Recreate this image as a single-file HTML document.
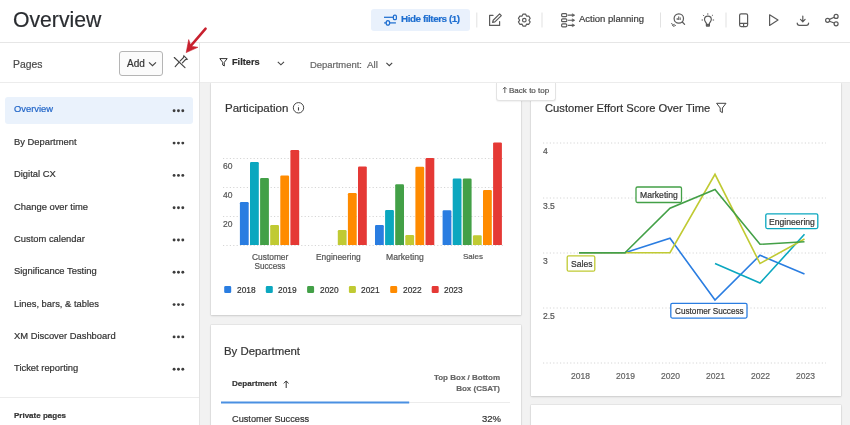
<!DOCTYPE html>
<html><head><meta charset="utf-8">
<style>
html,body{margin:0;padding:0;}
body{width:850px;height:425px;overflow:hidden;position:relative;background:#fff;font-family:"Liberation Sans",sans-serif;color:#333;}
.a{position:absolute;}
.t{position:absolute;white-space:nowrap;line-height:1;will-change:transform;-webkit-text-stroke:0.2px currentColor;}
.hl{position:absolute;background:#e4e4e4;}
.card{position:absolute;background:#fff;box-shadow:0 0 0 0.5px rgba(0,0,0,0.09),0 1px 2px rgba(0,0,0,0.12);}
svg{position:absolute;overflow:visible;}
</style></head><body>

<!-- top header -->
<div class="t" id="title" style="left:12.9px;top:9.2px;font-size:21.2px;color:#2a2d31;">Overview</div>
<div class="hl" style="left:0;top:42px;width:850px;height:1px;background:#e6e6e6;"></div>

<div class="a" style="left:371px;top:8.5px;width:99px;height:22.5px;background:#e9f1fc;border-radius:3px;"></div>
<svg style="left:0;top:0" width="850" height="42">
  <!-- sliders icon -->
  <g stroke="#1f6fd0" stroke-width="1.25" fill="none">
    <line x1="384" y1="17.3" x2="393" y2="17.3"/>
    <rect x="393.4" y="15.1" width="3" height="4.6" rx="1.3" fill="#e9f1fc"/>
    <line x1="384.1" y1="22.9" x2="395.9" y2="22.9"/>
    <ellipse cx="387.9" cy="22.9" rx="1.75" ry="2.2" fill="#e9f1fc"/>
  </g>
  <!-- separators -->
  <g fill="#e2e2e2">
    <rect x="476.3" y="12.5" width="1" height="15"/>
    <rect x="541.5" y="12.5" width="1" height="15"/>
    <rect x="660" y="12.5" width="1" height="15"/>
    <rect x="725.5" y="12.5" width="1" height="15"/>
  </g>
  <g stroke="#5a5a5a" stroke-width="1.2" fill="none" stroke-linecap="round" stroke-linejoin="round">
    <!-- edit -->
    <path d="M493 15.4 H489.6 V25.4 H499.6 V21.5"/>
    <path d="M492.6 22.4 L493.2 20.2 L499.6 13.9 L501.3 15.6 L494.9 21.9 Z"/>
    <!-- gear -->
    <path d="M522.09 16.00 L522.93 14.21 L525.67 14.21 L526.51 16.00 L526.79 16.16 L528.76 15.99 L530.13 18.37 L529.00 19.99 L529.00 20.31 L530.13 21.93 L528.76 24.31 L526.79 24.14 L526.51 24.30 L525.67 26.09 L522.93 26.09 L522.09 24.30 L521.81 24.14 L519.84 24.31 L518.47 21.93 L519.60 20.31 L519.60 19.99 L518.47 18.37 L519.84 15.99 L521.81 16.16 Z"/>
    <circle cx="524.3" cy="20.15" r="1.8"/>
    <!-- action planning -->
    <rect x="561.6" y="13.7" width="5.2" height="2.9" rx="1"/>
    <rect x="561.6" y="18.8" width="5.2" height="2.9" rx="1"/>
    <rect x="561.6" y="23.9" width="5.2" height="2.9" rx="1"/>
    <path d="M568.4 15.15 H573 M568.4 20.25 H573 M568.4 25.35 H573"/>
    <path d="M572.6 13.9 L574.8 15.15 L572.6 16.4 Z M572.6 19 L574.8 20.25 L572.6 21.5 Z M572.6 24.1 L574.8 25.35 L572.6 26.6 Z" fill="#5a5a5a" stroke-width="0.6"/>
    <!-- search analytics -->
    <circle cx="678.8" cy="18.5" r="4.7"/>
    <path d="M682.3 22 L684.6 24.4"/>
    <path d="M677.2 19.6 V18.4 M678.7 19.6 V16.8 M680.2 19.6 V17.8" stroke-width="1"/>
    <path d="M671.4 23.6 L673.4 24.8 M672.4 25.6 L674.4 24.4 M673.6 26.4 L675.6 25.4" stroke-width="0.9"/>
    <!-- bulb -->
    <path d="M706.4 25.8 V23.6 C706.4 22.4 704.5 21.4 704.5 19.5 A3.4 3.4 0 0 1 711.3 19.5 C711.3 21.4 709.4 22.4 709.4 23.6 V25.8 Z"/>
    <path d="M706.6 24.3 H709.2 M706.6 25.8 H709.2" stroke-width="1.3"/>
    <path d="M707.8 13.7 V14.3 M702 20 H702.6 M713.1 20 H713.7 M703.3 15.2 L703.8 15.7 M712.6 15.2 L712.1 15.7" stroke-width="1"/>
    <!-- phone -->
    <rect x="739.6" y="13.8" width="8" height="12.8" rx="1.5"/>
    <path d="M739.6 23.3 H747.6 M743.6 23.3 V26.6"/>
    <!-- play -->
    <path d="M769.6 14.8 V25.4 L778 20.1 Z"/>
    <!-- download -->
    <path d="M802.8 16.1 V21.6 M800.5 19.4 L802.8 21.8 L805.1 19.4"/>
    <path d="M797.2 23 C797.2 24.6 798 25.3 799.5 25.3 H806.3 C807.8 25.3 808.6 24.6 808.6 23"/>
    <!-- share -->
    <circle cx="827.6" cy="20.3" r="2"/>
    <circle cx="836.1" cy="16.4" r="2"/>
    <circle cx="836.1" cy="23.8" r="2"/>
    <path d="M829.5 19.4 L834.2 17.3 M829.5 21.3 L834.2 23"/>
  </g>
</svg>
<div class="t" style="left:401px;top:14.1px;font-size:9.9px;font-weight:bold;letter-spacing:-0.45px;color:#1f6fd0;">Hide filters (1)</div>
<div class="t" style="left:578.5px;top:14.1px;font-size:9.5px;color:#3b3b3b;">Action planning</div>

<!-- sidebar -->
<div class="hl" style="left:199px;top:42px;width:1px;height:383px;background:#e3e3e3;"></div>
<div class="hl" style="left:0;top:82px;width:199px;height:1px;background:#ececec;"></div>
<div class="t" style="left:12.9px;top:59.5px;font-size:10.4px;color:#4a4a4a;">Pages</div>
<div class="a" style="left:119.3px;top:51.2px;width:42px;height:22.5px;border:1px solid #b5b5b5;border-radius:3px;background:#fbfbfb;"></div>
<div class="t" style="left:127px;top:58.6px;font-size:10px;color:#333;">Add</div>
<svg style="left:0;top:0" width="200" height="90">
  <path d="M149 62.4 L152.5 65.6 L156 62.4" stroke="#444" stroke-width="1.15" fill="none"/>
  <g stroke="#444" stroke-width="1.15" fill="none" stroke-linecap="round">
    <path d="M174.3 57.5 L185 67.6"/>
    <path d="M175.2 66.6 L179.2 62.2"/>
    <path d="M180.2 60.8 L183.4 57.6 L183.9 55.8 L187.2 59.1 L185.5 59.6 L182.4 62.9"/>
  </g>
</svg>

<div class="a" style="left:5px;top:97px;width:188px;height:26.8px;background:#eaf2fc;border-radius:3px;"></div>
<div class="t" style="left:13.5px;top:104.4px;font-size:9.4px;color:#2266c8;">Overview</div>
<div class="t" style="left:13.5px;top:137.0px;font-size:9.4px;color:#333;">By Department</div>
<div class="t" style="left:13.5px;top:169.3px;font-size:9.4px;color:#333;">Digital CX</div>
<div class="t" style="left:13.5px;top:201.5px;font-size:9.4px;color:#333;">Change over time</div>
<div class="t" style="left:13.5px;top:234.0px;font-size:9.4px;color:#333;">Custom calendar</div>
<div class="t" style="left:13.5px;top:266.3px;font-size:9.4px;color:#333;">Significance Testing</div>
<div class="t" style="left:13.5px;top:298.5px;font-size:9.4px;color:#333;">Lines, bars, &amp; tables</div>
<div class="t" style="left:13.5px;top:331.0px;font-size:9.4px;color:#333;">XM Discover Dashboard</div>
<div class="t" style="left:13.5px;top:363.3px;font-size:9.4px;color:#333;">Ticket reporting</div>
<svg style="left:0;top:0" width="200" height="425">
  <g fill="#3c3c3c">
    <circle cx="174.1" cy="110.8" r="1.45"/><circle cx="178.45" cy="110.8" r="1.45"/><circle cx="182.8" cy="110.8" r="1.45"/>
    <circle cx="174.1" cy="143.1" r="1.45"/><circle cx="178.45" cy="143.1" r="1.45"/><circle cx="182.8" cy="143.1" r="1.45"/>
    <circle cx="174.1" cy="175.4" r="1.45"/><circle cx="178.45" cy="175.4" r="1.45"/><circle cx="182.8" cy="175.4" r="1.45"/>
    <circle cx="174.1" cy="207.7" r="1.45"/><circle cx="178.45" cy="207.7" r="1.45"/><circle cx="182.8" cy="207.7" r="1.45"/>
    <circle cx="174.1" cy="240.0" r="1.45"/><circle cx="178.45" cy="240.0" r="1.45"/><circle cx="182.8" cy="240.0" r="1.45"/>
    <circle cx="174.1" cy="272.3" r="1.45"/><circle cx="178.45" cy="272.3" r="1.45"/><circle cx="182.8" cy="272.3" r="1.45"/>
    <circle cx="174.1" cy="304.6" r="1.45"/><circle cx="178.45" cy="304.6" r="1.45"/><circle cx="182.8" cy="304.6" r="1.45"/>
    <circle cx="174.1" cy="336.9" r="1.45"/><circle cx="178.45" cy="336.9" r="1.45"/><circle cx="182.8" cy="336.9" r="1.45"/>
    <circle cx="174.1" cy="369.2" r="1.45"/><circle cx="178.45" cy="369.2" r="1.45"/><circle cx="182.8" cy="369.2" r="1.45"/>
  </g>
</svg>
<div class="hl" style="left:0;top:397px;width:199px;height:1px;background:#ececec;"></div>
<div class="t" style="left:13.6px;top:412px;font-size:8px;font-weight:bold;color:#333;">Private pages</div>

<!-- filter bar -->
<div class="hl" style="left:200px;top:82px;width:650px;height:1px;background:#ececec;"></div>
<svg style="left:0;top:0" width="850" height="90">
  <path d="M219.8 58.6 H227.2 L224.3 62.3 V66 L222.7 65 V62.3 Z" stroke="#333" stroke-width="1" fill="none" stroke-linejoin="round"/>
  <path d="M277.8 61.8 L280.9 64.8 L284 61.8" stroke="#444" stroke-width="1.1" fill="none"/>
  <path d="M386.4 62.9 L389.3 65.7 L392.2 62.9" stroke="#444" stroke-width="1.15" fill="none"/>
</svg>
<div class="t" style="left:232.2px;top:57.6px;font-size:9.2px;font-weight:bold;color:#2e2e2e;">Filters</div>
<div class="t" style="left:310px;top:60px;font-size:9.45px;color:#666;">Department:</div>
<div class="t" style="left:367px;top:60px;font-size:9.8px;color:#666;">All</div>

<!-- content -->
<div class="a" style="left:200px;top:83px;width:650px;height:342px;background:#f2f2f2;"></div>
<div class="card" style="left:210.5px;top:83px;width:310.5px;height:231.5px;"></div>
<div class="card" style="left:531px;top:83px;width:310px;height:313px;"></div>
<div class="card" style="left:210.5px;top:325px;width:310.5px;height:120px;"></div>
<div class="card" style="left:531px;top:405px;width:310px;height:40px;"></div>
<div class="hl" style="left:200px;top:82px;width:650px;height:1px;background:#ececec;"></div>

<!-- back to top -->
<div class="a" style="left:496.4px;top:82.5px;width:59.4px;height:18.3px;background:#fff;border:1px solid #e3e3e3;border-top:none;border-radius:0 0 3px 3px;box-sizing:border-box;box-shadow:0 1px 1.5px rgba(0,0,0,0.06);"></div>
<div class="t" style="left:509.3px;top:86.5px;font-size:8.05px;color:#555;">Back to top</div>
<svg style="left:0;top:0" width="850" height="120"><path d="M504.8 93 V87.3 M502.9 89.2 L504.8 87.2 L506.7 89.2" stroke="#555" stroke-width="0.9" fill="none"/></svg>

<!-- participation card -->
<div class="t" style="left:225px;top:103.2px;font-size:11.5px;color:#333;">Participation</div>
<svg style="left:0;top:0" width="850" height="425">
  <circle cx="298.5" cy="107.8" r="5.2" stroke="#444" stroke-width="1" fill="none"/>
  <path d="M298.5 105.3 V105.6 M298.5 107.3 V110.5" stroke="#444" stroke-width="1.1"/>
  <g stroke="#d6d6d6" stroke-width="1" stroke-dasharray="1.2 2.2">
    <line x1="223" y1="158.5" x2="504" y2="158.5"/>
    <line x1="223" y1="187.5" x2="504" y2="187.5"/>
    <line x1="223" y1="216.5" x2="504" y2="216.5"/>
    <line x1="223" y1="245.5" x2="504" y2="245.5"/>
  </g>
  <g>
<path d="M239.9 245.1 V203.2 Q239.9 202.0 241.1 202.0 H247.5 Q248.7 202.0 248.7 203.2 V245.1 Z" fill="#2a7de1"/>
<path d="M250.0 245.1 V163.2 Q250.0 162.0 251.2 162.0 H257.6 Q258.8 162.0 258.8 163.2 V245.1 Z" fill="#0ba7bf"/>
<path d="M260.1 245.1 V179.2 Q260.1 178.0 261.3 178.0 H267.7 Q268.9 178.0 268.9 179.2 V245.1 Z" fill="#43a047"/>
<path d="M270.2 245.1 V226.2 Q270.2 225.0 271.4 225.0 H277.8 Q279.0 225.0 279.0 226.2 V245.1 Z" fill="#c0ca33"/>
<path d="M280.3 245.1 V176.7 Q280.3 175.5 281.5 175.5 H287.9 Q289.1 175.5 289.1 176.7 V245.1 Z" fill="#ff8b00"/>
<path d="M290.4 245.1 V151.2 Q290.4 150.0 291.6 150.0 H298.0 Q299.2 150.0 299.2 151.2 V245.1 Z" fill="#e53935"/>
<path d="M337.8 245.1 V231.2 Q337.8 230.0 339.0 230.0 H345.4 Q346.6 230.0 346.6 231.2 V245.1 Z" fill="#c0ca33"/>
<path d="M347.9 245.1 V194.2 Q347.9 193.0 349.1 193.0 H355.5 Q356.7 193.0 356.7 194.2 V245.1 Z" fill="#ff8b00"/>
<path d="M358.0 245.1 V167.6 Q358.0 166.4 359.2 166.4 H365.6 Q366.8 166.4 366.8 167.6 V245.1 Z" fill="#e53935"/>
<path d="M375.0 245.1 V226.2 Q375.0 225.0 376.2 225.0 H382.6 Q383.8 225.0 383.8 226.2 V245.1 Z" fill="#2a7de1"/>
<path d="M385.1 245.1 V211.2 Q385.1 210.0 386.3 210.0 H392.7 Q393.9 210.0 393.9 211.2 V245.1 Z" fill="#0ba7bf"/>
<path d="M395.2 245.1 V185.5 Q395.2 184.3 396.4 184.3 H402.8 Q404.0 184.3 404.0 185.5 V245.1 Z" fill="#43a047"/>
<path d="M405.3 245.1 V236.2 Q405.3 235.0 406.5 235.0 H412.9 Q414.1 235.0 414.1 236.2 V245.1 Z" fill="#c0ca33"/>
<path d="M415.4 245.1 V167.9 Q415.4 166.7 416.6 166.7 H423.0 Q424.2 166.7 424.2 167.9 V245.1 Z" fill="#ff8b00"/>
<path d="M425.5 245.1 V159.2 Q425.5 158.0 426.7 158.0 H433.1 Q434.3 158.0 434.3 159.2 V245.1 Z" fill="#e53935"/>
<path d="M442.6 245.1 V211.5 Q442.6 210.3 443.8 210.3 H450.2 Q451.4 210.3 451.4 211.5 V245.1 Z" fill="#2a7de1"/>
<path d="M452.7 245.1 V179.8 Q452.7 178.6 453.9 178.6 H460.3 Q461.5 178.6 461.5 179.8 V245.1 Z" fill="#0ba7bf"/>
<path d="M462.8 245.1 V179.8 Q462.8 178.6 464.0 178.6 H470.4 Q471.6 178.6 471.6 179.8 V245.1 Z" fill="#43a047"/>
<path d="M472.9 245.1 V236.4 Q472.9 235.2 474.1 235.2 H480.5 Q481.7 235.2 481.7 236.4 V245.1 Z" fill="#c0ca33"/>
<path d="M483.0 245.1 V191.2 Q483.0 190.0 484.2 190.0 H490.6 Q491.8 190.0 491.8 191.2 V245.1 Z" fill="#ff8b00"/>
<path d="M493.1 245.1 V143.6 Q493.1 142.4 494.3 142.4 H500.7 Q501.9 142.4 501.9 143.6 V245.1 Z" fill="#e53935"/>
</g>
</svg>
<div class="t" style="left:223px;top:161.8px;font-size:8.5px;color:#555;">60</div>
<div class="t" style="left:223px;top:190.8px;font-size:8.5px;color:#555;">40</div>
<div class="t" style="left:223px;top:219.8px;font-size:8.5px;color:#555;">20</div>


<div class="t" style="left:251.5px;top:253px;font-size:8.4px;color:#555;">Customer</div>
<div class="t" style="left:240px;top:263.2px;width:60px;text-align:center;font-size:8.2px;color:#555;">Success</div>
<div class="t" style="left:315.5px;top:253px;font-size:8.4px;color:#555;">Engineering</div>
<div class="t" style="left:386px;top:253px;font-size:8.6px;color:#555;">Marketing</div>
<div class="t" style="left:462.6px;top:253px;font-size:8px;color:#555;">Sales</div>
<svg style="left:0;top:0" width="850" height="425">
  <rect x="224.2" y="286.1" width="7" height="7" rx="1.3" fill="#2a7de1"/>
  <rect x="265.8" y="286.1" width="7" height="7" rx="1.3" fill="#0ba7bf"/>
  <rect x="307.1" y="286.1" width="7" height="7" rx="1.3" fill="#43a047"/>
  <rect x="348.9" y="286.1" width="7" height="7" rx="1.3" fill="#c0ca33"/>
  <rect x="390.2" y="286.1" width="7" height="7" rx="1.3" fill="#ff8b00"/>
  <rect x="431.7" y="286.1" width="7" height="7" rx="1.3" fill="#e53935"/>
</svg>
<div class="t" style="left:236.5px;top:286px;font-size:8.35px;color:#333;">2018</div>
<div class="t" style="left:278px;top:286px;font-size:8.35px;color:#333;">2019</div>
<div class="t" style="left:319.6px;top:286px;font-size:8.35px;color:#333;">2020</div>
<div class="t" style="left:360.8px;top:286px;font-size:8.35px;color:#333;">2021</div>
<div class="t" style="left:402.5px;top:286px;font-size:8.35px;color:#333;">2022</div>
<div class="t" style="left:443.8px;top:286px;font-size:8.35px;color:#333;">2023</div>

<!-- line chart card -->
<div class="t" style="left:545px;top:103px;font-size:11.2px;color:#333;">Customer Effort Score Over Time</div>
<svg style="left:0;top:0" width="850" height="425">
  <path d="M716.6 103.3 H726 L722.4 108 V112.6 L720.2 111.4 V108 Z" stroke="#444" stroke-width="1" fill="none" stroke-linejoin="round"/>
  <g stroke="#d6d6d6" stroke-width="1" stroke-dasharray="1.2 2.2">
    <line x1="543" y1="143" x2="826" y2="143"/>
    <line x1="543" y1="198" x2="826" y2="198"/>
    <line x1="543" y1="253" x2="826" y2="253"/>
    <line x1="543" y1="308" x2="826" y2="308"/>
    <line x1="543" y1="363" x2="826" y2="363"/>
  </g>
  <g fill="none" stroke-width="1.6" stroke-linejoin="miter">
    <polyline stroke="#2a7de1" points="579,252.8 625,252.8 670,238.3 715,300 760,255.3 804.5,274"/>
    <polyline stroke="#0ba7bf" points="715,263.5 760,283.1 804.5,234.2"/>
    <polyline stroke="#c0ca33" points="579,252.8 625,252.8 670,252.6 715,174.3 760,263.5 804.5,239"/>
    <polyline stroke="#43a047" points="579,252.8 625,252.8 670,208.3 715,189.4 760,244.3 804.5,241.7"/>
  </g>
  <g fill="#fff" stroke-width="1.3">
    <rect x="636" y="187" width="45.5" height="15.5" rx="1.5" stroke="#43a047"/>
    <rect x="567.2" y="255.8" width="27.6" height="15.4" rx="1.5" stroke="#c0ca33"/>
    <rect x="765.8" y="213.8" width="52" height="14.8" rx="1.5" stroke="#0ba7bf"/>
    <rect x="670.8" y="303.3" width="76.2" height="14.8" rx="1.5" stroke="#2a7de1"/>
  </g>
</svg>
<div class="t" style="left:639.5px;top:191.2px;font-size:8.6px;color:#333;">Marketing</div>
<div class="t" style="left:571px;top:260px;font-size:8.6px;color:#333;">Sales</div>
<div class="t" style="left:769px;top:217.6px;font-size:8.6px;color:#333;">Engineering</div>
<div class="t" style="left:675px;top:307.5px;font-size:8.2px;color:#333;">Customer Success</div>
<div class="t" style="left:543px;top:146.5px;font-size:8.5px;color:#555;">4</div>
<div class="t" style="left:543px;top:201.5px;font-size:8.5px;color:#555;">3.5</div>
<div class="t" style="left:543px;top:256.5px;font-size:8.5px;color:#555;">3</div>
<div class="t" style="left:543px;top:311.5px;font-size:8.5px;color:#555;">2.5</div>
<div class="t" style="left:571px;top:371.5px;font-size:8.5px;color:#636363;">2018</div>
<div class="t" style="left:616px;top:371.5px;font-size:8.5px;color:#636363;">2019</div>
<div class="t" style="left:661px;top:371.5px;font-size:8.5px;color:#636363;">2020</div>
<div class="t" style="left:706px;top:371.5px;font-size:8.5px;color:#636363;">2021</div>
<div class="t" style="left:751px;top:371.5px;font-size:8.5px;color:#636363;">2022</div>
<div class="t" style="left:795.5px;top:371.5px;font-size:8.5px;color:#636363;">2023</div>

<!-- by department card -->
<div class="t" style="left:224px;top:345.5px;font-size:11.4px;color:#333;">By Department</div>
<div class="t" style="left:232.4px;top:380px;font-size:8.1px;font-weight:bold;color:#333;">Department</div>
<svg style="left:0;top:0" width="850" height="425">
  <path d="M286.2 388 V381 M283.8 383.4 L286.2 381 L288.6 383.4" stroke="#333" stroke-width="1" fill="none"/>
  <rect x="221" y="402" width="289" height="1" fill="#ececec"/>
  <rect x="221" y="401.5" width="188.2" height="2" fill="#4a90e2"/>
</svg>
<div class="t" style="left:400px;top:374px;width:100px;text-align:right;font-size:8px;font-weight:bold;color:#666;">Top Box / Bottom</div>
<div class="t" style="left:400px;top:385px;width:100px;text-align:right;font-size:8px;font-weight:bold;color:#666;">Box (CSAT)</div>
<div class="t" style="left:232.4px;top:414.5px;font-size:9.2px;color:#333;">Customer Success</div>
<div class="t" style="left:400px;top:413.9px;width:101px;text-align:right;font-size:9.5px;color:#333;">32%</div>

<!-- red arrow -->
<svg style="left:0;top:0" width="850" height="425">
  <path d="M205.6 28.6 L191 45.6" stroke="#c8202e" stroke-width="2.5" stroke-linecap="round"/>
  <path d="M186.2 52.6 L188.7 39.6 L190.4 44.6 L192.4 46.4 L197.9 47.3 Z" fill="#c8202e" stroke="#c8202e" stroke-width="0.6" stroke-linejoin="round"/>
</svg>

</body></html>
